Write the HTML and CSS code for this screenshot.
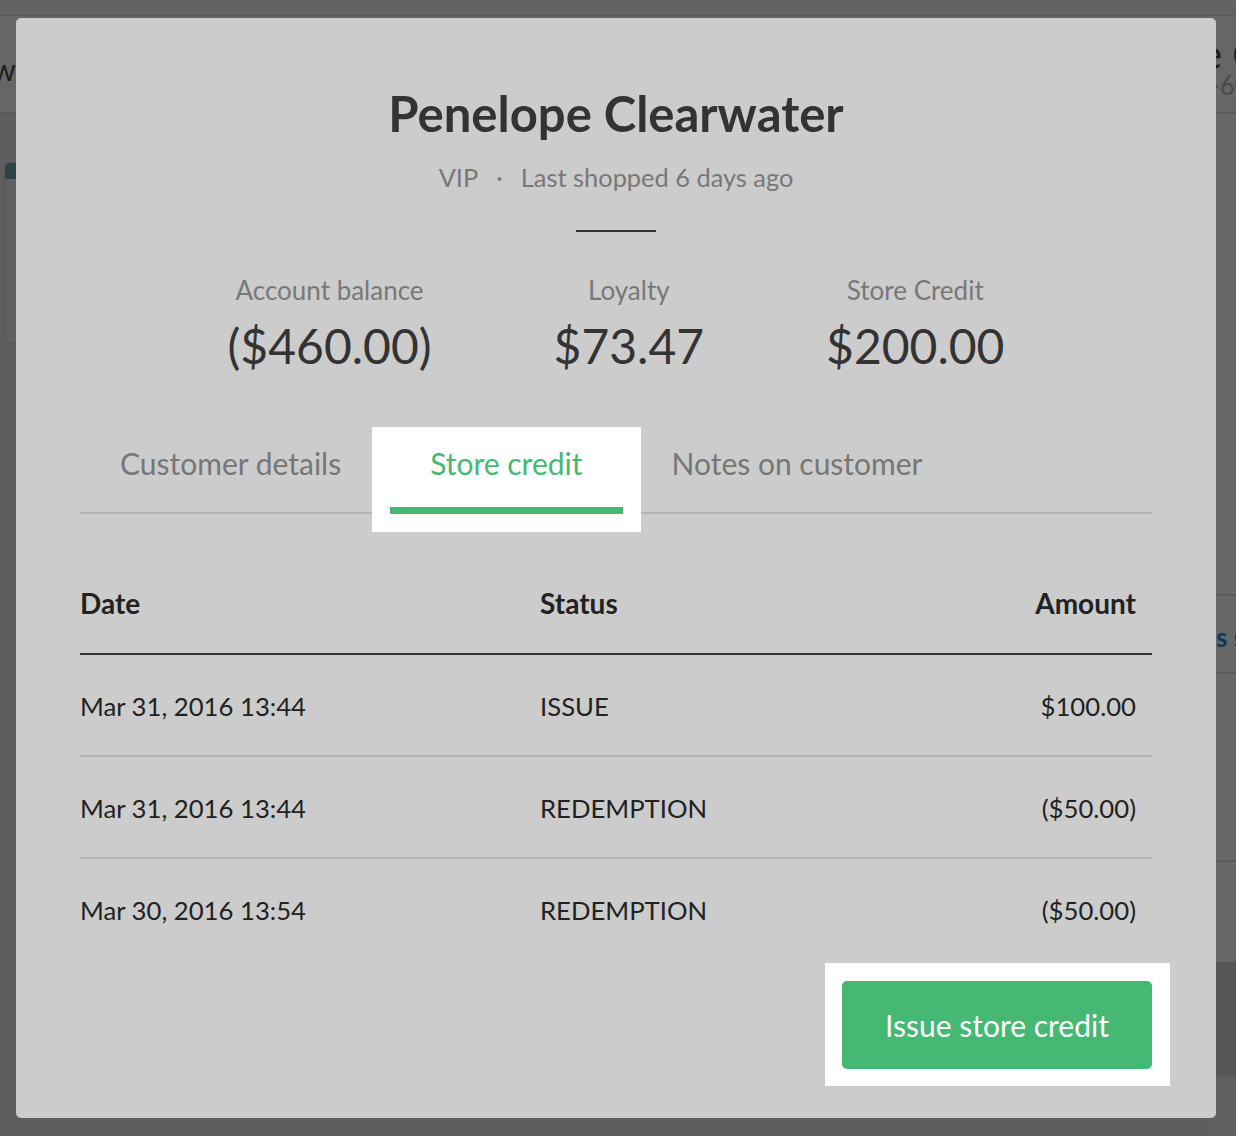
FILE: index.html
```html
<!DOCTYPE html>
<html lang="en">
<head>
<meta charset="utf-8">
<title>Penelope Clearwater – Store credit</title>
<link rel="stylesheet" href="styles.css">
</head>
<body>
<div class="page">
  <div class="topstrip"></div>
  <header class="header">
    <div class="header-left">New</div>
    <div class="header-right">
      <div class="hr-name">e Clearwater</div>
      <div class="hr-sub">-6050</div>
    </div>
  </header>
  <main class="main">
    <div class="left-col">
      <div class="card"><div class="card-top"></div></div>
    </div>
    <div class="right-col">
      <div class="rc-block rc-a"></div>
      <div class="rc-block rc-b"><span class="rc-link">s s</span></div>
      <div class="rc-block rc-c"></div>
      <div class="rc-block rc-d"></div>
      <div class="rc-block rc-e"></div>
      <div class="rc-block rc-f"></div>
    </div>
  </main>
</div>

<div class="overlay">
  <section class="modal">
    <h1 class="title">Penelope Clearwater</h1>
    <p class="subtitle"><span>VIP</span><span class="dot">·</span><span>Last shopped 6 days ago</span></p>
    <div class="divider"></div>

    <div class="stats">
      <div class="stat">
        <div class="stat-label">Account balance</div>
        <div class="stat-value">($460.00)</div>
      </div>
      <div class="stat">
        <div class="stat-label">Loyalty</div>
        <div class="stat-value">$73.47</div>
      </div>
      <div class="stat">
        <div class="stat-label">Store Credit</div>
        <div class="stat-value">$200.00</div>
      </div>
    </div>

    <nav class="tabs">
      <div class="tab">Customer details</div>
      <div class="tab tab-active">Store credit</div>
      <div class="tab">Notes on customer</div>
    </nav>

    <div class="table">
      <div class="row row-head">
        <div class="c-date">Date</div>
        <div class="c-status">Status</div>
        <div class="c-amount">Amount</div>
      </div>
      <div class="row row-body">
        <div class="c-date">Mar 31, 2016 13:44</div>
        <div class="c-status">ISSUE</div>
        <div class="c-amount">$100.00</div>
      </div>
      <div class="row row-body">
        <div class="c-date">Mar 31, 2016 13:44</div>
        <div class="c-status">REDEMPTION</div>
        <div class="c-amount">($50.00)</div>
      </div>
      <div class="row row-body row-last">
        <div class="c-date">Mar 30, 2016 13:54</div>
        <div class="c-status">REDEMPTION</div>
        <div class="c-amount">($50.00)</div>
      </div>
    </div>

    <div class="actions">
      <div class="spotlight">
        <button class="btn-issue">Issue store credit</button>
      </div>
    </div>
  </section>
</div>
</body>
</html>
```

FILE: styles.css
```css
* { box-sizing: border-box; }

html, body {
  margin: 0;
  padding: 0;
}

body {
  width: 1236px;
  height: 1136px;
  overflow: hidden;
  background: #5e5e5e;
  font-family: Lato, "Open Sans", "Liberation Sans", sans-serif;
  position: relative;
}

/* ---------- dimmed page behind the modal ---------- */
.page {
  width: 1236px;
  height: 1136px;
  overflow: hidden;
}

.topstrip {
  height: 16px;
  background: #636363;
  border-bottom: 1px solid #595959;
}

.header {
  height: 98px;
  background: #666666;
  border-bottom: 2px solid #5a5a5a;
  display: flex;
  justify-content: space-between;
  align-items: flex-start;
}

.header-left {
  margin-left: -46px;
  margin-top: 35px;
  font-size: 30px;
  color: #1e1e1e;
  line-height: 36px;
}

.header-right {
  width: 24px;
  overflow: hidden;
  white-space: nowrap;
  margin-top: 20px;
}

.hr-name {
  margin-left: -11px;
  font-size: 40px;
  line-height: 36px;
  color: #1c1c1c;
}

.hr-sub {
  margin-left: -2px;
  font-size: 26px;
  line-height: 26px;
  color: #4a4a4a;
}

.main {
  display: flex;
  justify-content: space-between;
  height: 1020px;
}

.left-col {
  width: 40px;
  padding-top: 48px;
  padding-left: 4px;
}

.card {
  width: 30px;
  height: 182px;
  border-radius: 6px;
  background: #606060;
  border: 1px solid #575757;
  overflow: hidden;
}

.card-top {
  height: 16px;
  background: #2f4247;
}

.right-col {
  width: 30px;
  background: #676767;
  display: flex;
  flex-direction: column;
}

.rc-block { border-bottom: 2px solid #5b5b5b; }
.rc-a { height: 482px; }
.rc-b { height: 78px; padding-top: 26px; padding-left: 10px; overflow: hidden; white-space: nowrap; }
.rc-c { height: 188px; }
.rc-d { height: 100px; border-bottom: none; }
.rc-e { height: 116px; background: #565656; }
.rc-f { flex: 1; background: #606060; border-bottom: none; }

.rc-link {
  display: block;
  font-size: 26px;
  font-weight: 700;
  color: #0d3a5c;
  line-height: 30px;
}

/* ---------- modal ---------- */
.overlay {
  position: absolute;
  inset: 0;
}

.modal {
  position: absolute;
  top: 18px;
  left: 16px;
  width: 1200px;
  height: 1100px;
  background: #cccccc;
  border-radius: 5px;
  padding: 66px 64px 0;
  display: flex;
  flex-direction: column;
  align-items: stretch;
}

.title {
  margin: 0;
  text-align: center;
  font-size: 49px;
  line-height: 58px;
  font-weight: 700;
  color: #333333;
}

.subtitle {
  margin: 19px 0 0;
  text-align: center;
  font-size: 25.4px;
  line-height: 32px;
  color: #787878;
  display: flex;
  justify-content: center;
  gap: 14px;
}

.dot { padding: 0 4px; }

.divider {
  align-self: center;
  width: 80px;
  height: 2px;
  background: #333333;
  margin-top: 37px;
}

.stats {
  margin-top: 42px;
  display: flex;
  justify-content: center;
  gap: 122px;
}

.stat {
  display: flex;
  flex-direction: column;
  align-items: center;
}

.stat-label {
  font-size: 26px;
  line-height: 32px;
  color: #787878;
}

.stat-value {
  margin-top: 12px;
  font-size: 48px;
  line-height: 56px;
  color: #333333;
}

.tabs {
  margin-top: 71px;
  display: flex;
  gap: 9px;
  border-bottom: 2px solid #b3b3b3;
}

.tab {
  margin-bottom: -2px;
  padding: 0 40px 26px;
  font-size: 30px;
  line-height: 36px;
  color: #777777;
  border-bottom: 7px solid transparent;
}

.tab-active {
  color: #45b873;
  border-bottom-color: #45b873;
  background: #ffffff;
  box-shadow: 0 0 0 18px #ffffff;
}

.table {
  margin-top: 39px;
}

.row {
  display: grid;
  grid-template-columns: 460px 1fr auto;
  align-items: center;
  height: 102px;
  border-bottom: 2px solid #b3b3b3;
  color: #222222;
}

.row-head {
  font-size: 28px;
  font-weight: 700;
  border-bottom-color: #333333;
}

.row-body {
  font-size: 25.7px;
  padding-top: 2px;
}

.row-last {
  border-bottom: none;
  height: 100px;
}

.c-amount {
  padding-right: 16px;
  text-align: right;
}

.actions {
  margin-top: 4px;
  margin-right: -18px;
  display: flex;
  justify-content: flex-end;
}

.spotlight {
  background: #ffffff;
  padding: 18px 18px 17px 17px;
}

.btn-issue {
  display: block;
  width: 310px;
  height: 88px;
  border: none;
  border-radius: 5px;
  background: #45b873;
  color: #ffffff;
  font-family: Lato, "Open Sans", "Liberation Sans", sans-serif;
  font-size: 30px;
  cursor: pointer;
}
```
